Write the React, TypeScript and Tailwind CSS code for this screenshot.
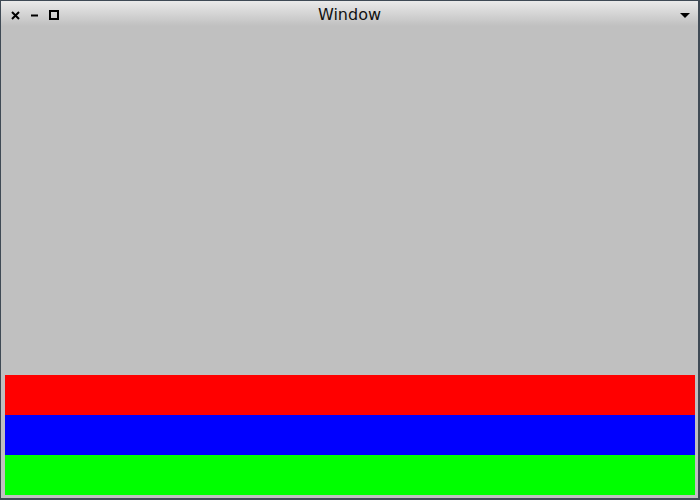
import React from "react";

const TitleButtons = () => (
  <div className="flex items-center gap-[10px] pl-[10px] pt-[3px]">
    <svg width="9" height="9" viewBox="0 0 9 9">
      <path d="M1 1 L8 8 M8 1 L1 8" stroke="#000" strokeWidth="2" />
    </svg>
    <svg width="9" height="9" viewBox="0 0 9 9">
      <path d="M1 4.5 H8" stroke="#000" strokeWidth="2" />
    </svg>
    <svg width="10" height="10" viewBox="0 0 10 10">
      <rect x="1" y="1" width="8" height="8" fill="none" stroke="#000" strokeWidth="2" />
    </svg>
  </div>
);

export default function App() {
  return (
    <div className="w-[700px] h-[500px] bg-[#3f4a55] pl-[1px] pr-[2px] pt-[1px] pb-[2px]">
      <div className="flex flex-col w-full h-full bg-[#c0c0c0]">
        <div className="relative flex items-center h-[25px] bg-gradient-to-b from-[#eaeaea] to-[#c0c0c0]">
          <TitleButtons />
          <div className="absolute inset-0 flex items-center justify-center text-[16px] text-[#111] font-['DejaVu_Sans',sans-serif] pt-[3px]">
            Window
          </div>
          <div className="ml-auto pr-[8px] pt-[3px]">
            <svg width="10" height="7" viewBox="0 0 10 7">
              <path d="M0 1 H10 L5 6 Z" fill="#000" />
            </svg>
          </div>
        </div>
        <div className="flex-1" />
        <div className="flex flex-col pl-[4px] pr-[3px] pb-[3px]">
          <div className="h-[40px] bg-[#ff0000]" />
          <div className="h-[40px] bg-[#0000ff]" />
          <div className="h-[40px] bg-[#00ff00]" />
        </div>
      </div>
    </div>
  );
}
